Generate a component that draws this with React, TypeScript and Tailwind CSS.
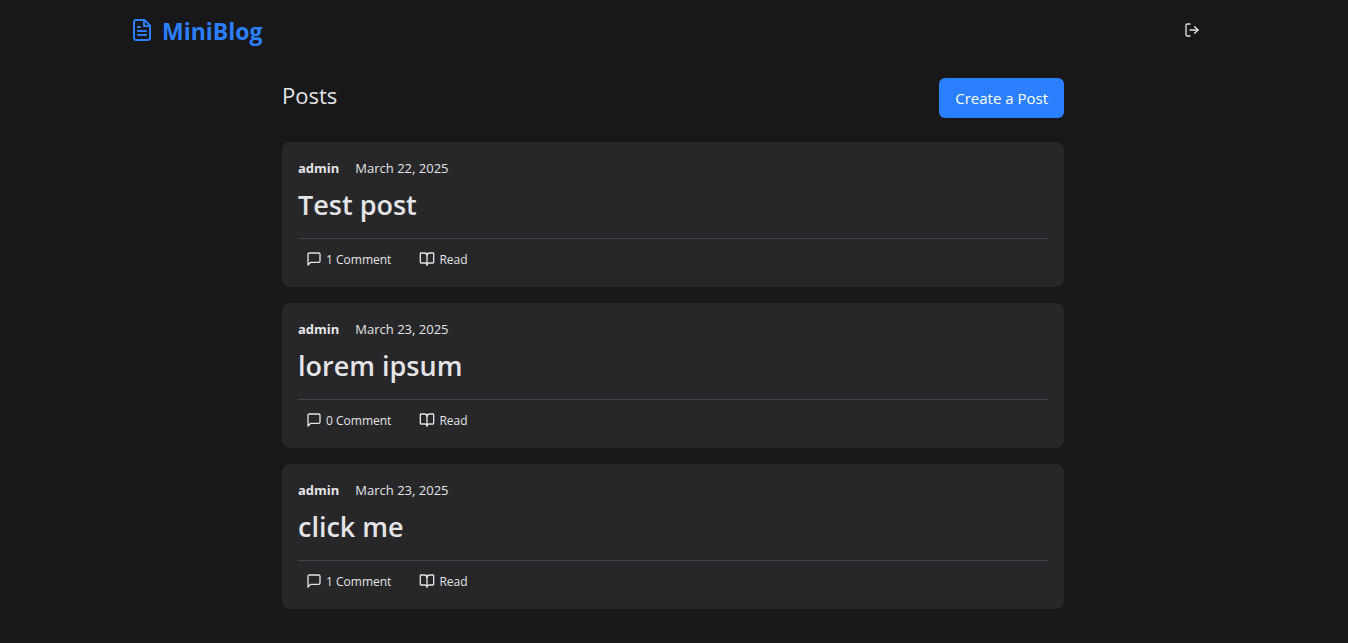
import type { ReactNode } from "react";

type Post = { id: number; author: string; date: string; title: string; comments: number };

const posts: Post[] = [
  { id: 1, author: "admin", date: "March 22, 2025", title: "Test post", comments: 1 },
  { id: 2, author: "admin", date: "March 23, 2025", title: "lorem ipsum", comments: 0 },
  { id: 3, author: "admin", date: "March 23, 2025", title: "click me", comments: 1 },
];

function Icon({ className, children }: { className: string; children: ReactNode }) {
  return (
    <svg
      viewBox="0 0 24 24"
      fill="none"
      stroke="currentColor"
      strokeWidth="2"
      strokeLinecap="round"
      strokeLinejoin="round"
      aria-hidden="true"
      className={className}
    >
      {children}
    </svg>
  );
}

function Header() {
  return (
    <header className="mx-auto flex h-15 w-full max-w-[1086px] items-center justify-between">
      <a href="#" className="flex items-center gap-2 text-[#2b7fff]">
        <Icon className="size-6 shrink-0">
          <path d="M14.5 2H6a2 2 0 0 0-2 2v16a2 2 0 0 0 2 2h12a2 2 0 0 0 2-2V7.5L14.5 2z" />
          <path d="M14 2v6h6" />
          <path d="M10 9H8" />
          <path d="M16 13H8" />
          <path d="M16 17H8" />
        </Icon>
        <span className="pt-0.5 text-[23px] leading-8 font-bold">MiniBlog</span>
      </a>
      <button type="button" aria-label="Log out" className="px-4 py-2">
        <Icon className="size-4">
          <path d="M9 21H5a2 2 0 0 1-2-2V5a2 2 0 0 1 2-2h4" />
          <path d="m16 17 5-5-5-5" />
          <path d="M21 12H9" />
        </Icon>
      </button>
    </header>
  );
}

function PostCard({ post }: { post: Post }) {
  return (
    <article className="rounded-lg bg-[#27272a] p-4">
      <div className="flex gap-4 text-[13px] leading-5">
        <span className="font-bold">{post.author}</span>
        <time>{post.date}</time>
      </div>
      <h2 className="mt-2 text-[27px] leading-[38px] font-semibold">{post.title}</h2>
      <div className="mt-3.5 flex gap-3 border-t border-[#3f3f46] text-[12px] leading-[18px]">
        <button type="button" className="flex items-start gap-1 px-2 pt-3 pb-0.5">
          <Icon className="size-4">
            <path d="M21 15a2 2 0 0 1-2 2H7l-4 4V5a2 2 0 0 1 2-2h14a2 2 0 0 1 2 2z" />
          </Icon>
          {post.comments} Comment
        </button>
        <button type="button" className="flex items-start gap-1 px-2 pt-3 pb-0.5">
          <Icon className="size-4">
            <path d="M12 7v14" />
            <path d="M3 18a1 1 0 0 1-1-1V4a1 1 0 0 1 1-1h5a4 4 0 0 1 4 4 4 4 0 0 1 4-4h5a1 1 0 0 1 1 1v13a1 1 0 0 1-1 1h-6a3 3 0 0 0-3 3 3 3 0 0 0-3-3z" />
          </Icon>
          Read
        </button>
      </div>
    </article>
  );
}

export default function App() {
  return (
    <div className="min-h-screen bg-[#18181b] pr-[2px] font-['Open_Sans','Noto_Sans',sans-serif] text-[#e4e4e7]">
      <Header />
      <main className="mx-auto w-full max-w-[782px] pt-[18px] pb-8">
        <div className="mb-6 flex items-start justify-between">
          <h1 className="text-[22px] leading-[34px]">Posts</h1>
          <button type="button" className="h-10 rounded-md bg-[#2b7fff] px-4 text-[15px] text-white">
            Create a Post
          </button>
        </div>
        <div className="flex flex-col gap-4">
          {posts.map((post) => (
            <PostCard key={post.id} post={post} />
          ))}
        </div>
      </main>
    </div>
  );
}
